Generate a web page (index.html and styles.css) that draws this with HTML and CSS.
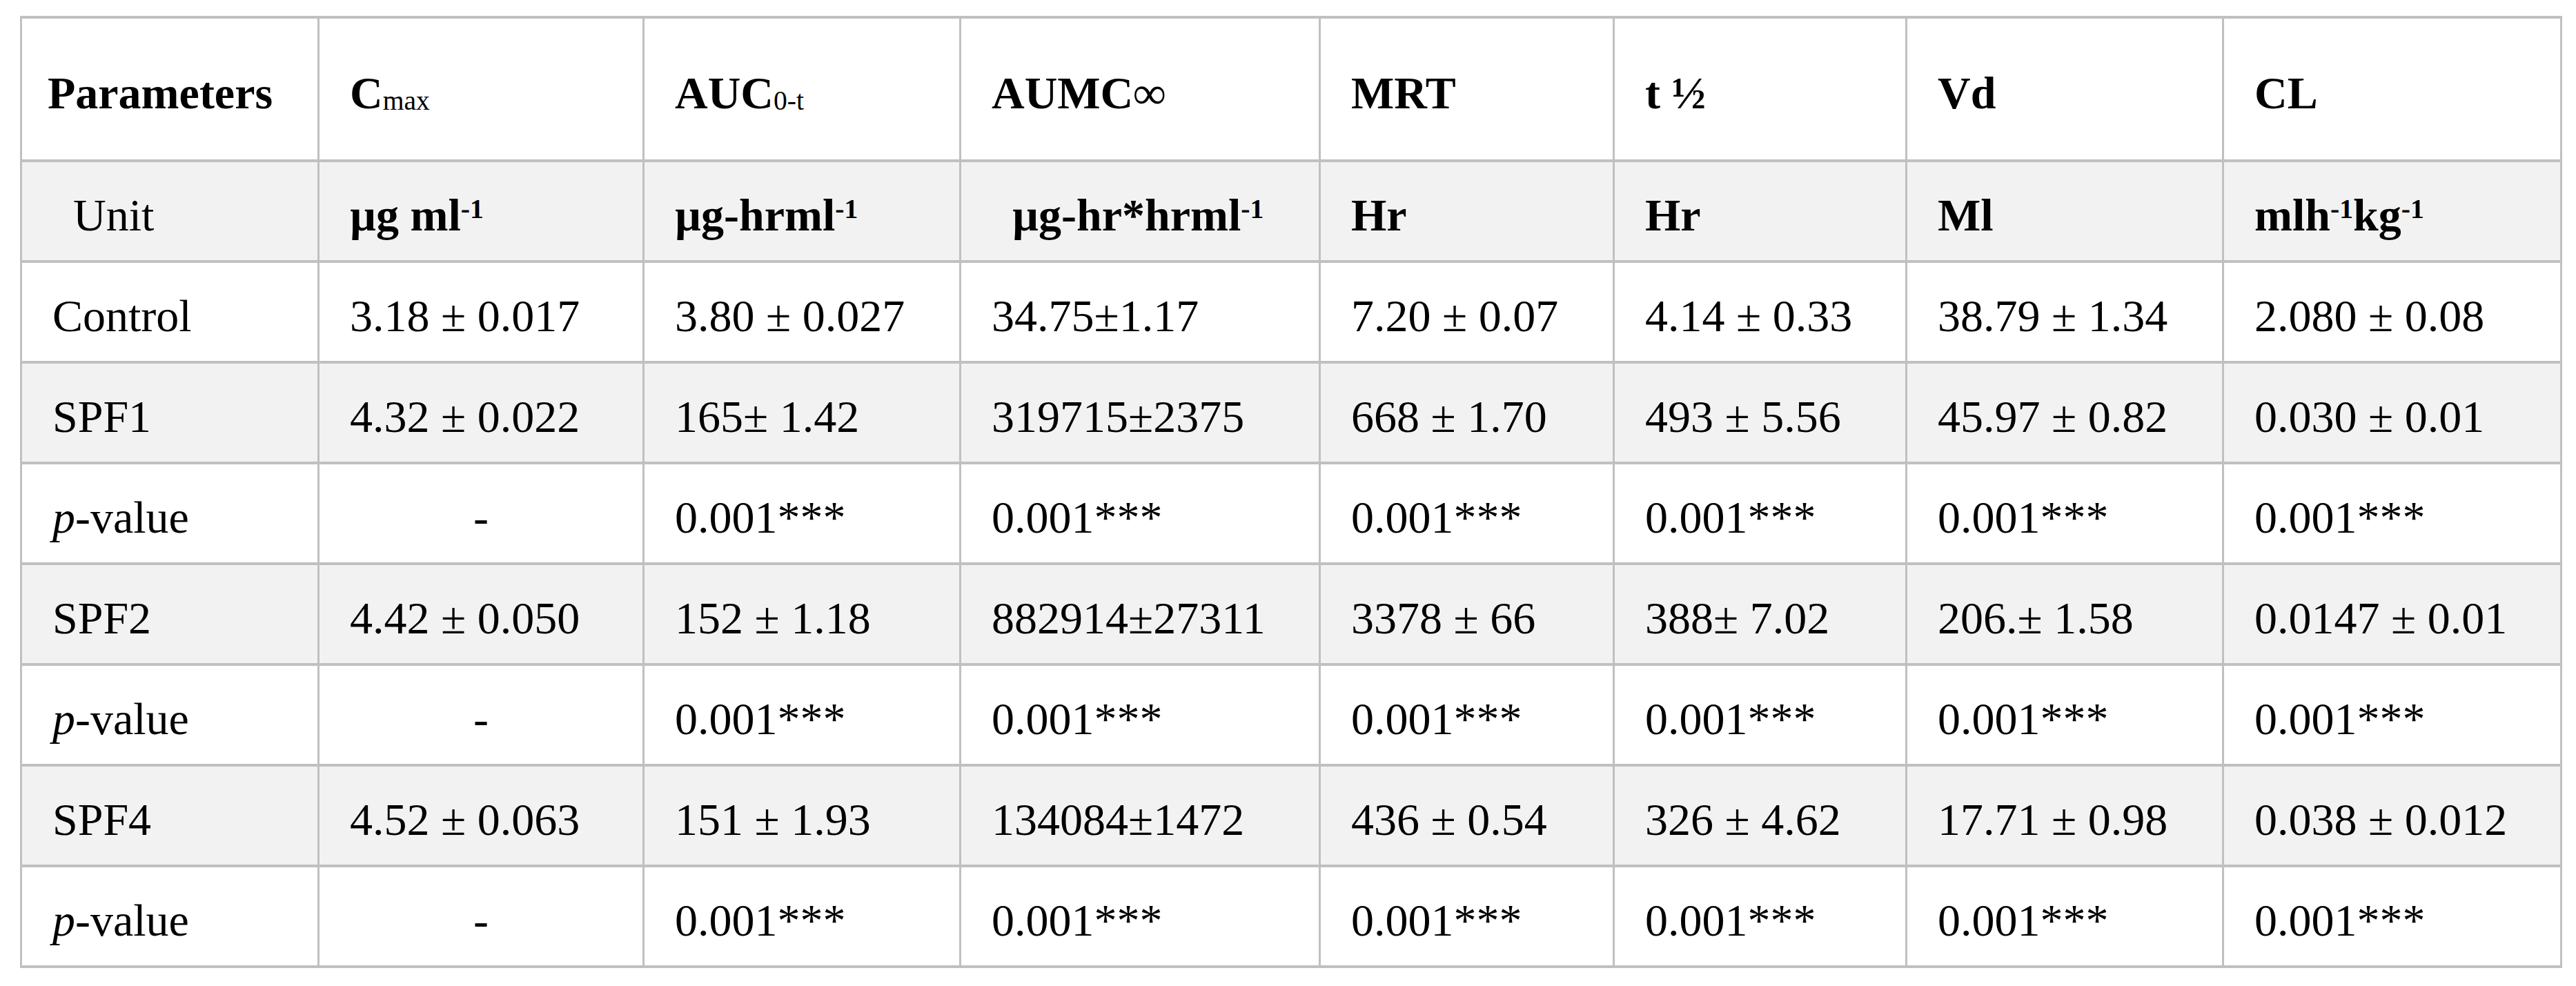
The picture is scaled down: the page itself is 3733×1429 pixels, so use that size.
FILE: index.html
```html
<!DOCTYPE html>
<html lang="en">
<head>
<meta charset="utf-8">
<title>Pharmacokinetic parameters</title>
<link rel="stylesheet" href="styles.css">
</head>
<body>
<div class="table">
  <div class="row head">
    <div class="cell first-head"><span>Parameters</span></div>
    <div class="cell"><span>C<span class="sub">max</span></span></div>
    <div class="cell"><span>AUC<span class="sub">0-t</span></span></div>
    <div class="cell"><span>AUMC∞</span></div>
    <div class="cell"><span>MRT</span></div>
    <div class="cell"><span>t ½</span></div>
    <div class="cell"><span>Vd</span></div>
    <div class="cell"><span>CL</span></div>
  </div>
  <div class="row alt units">
    <div class="cell indent plain"><span>Unit</span></div>
    <div class="cell"><span>µg ml<sup>-1</sup></span></div>
    <div class="cell"><span>µg-hrml<sup>-1</sup></span></div>
    <div class="cell indent"><span>µg-hr*hrml<sup>-1</sup></span></div>
    <div class="cell"><span>Hr</span></div>
    <div class="cell"><span>Hr</span></div>
    <div class="cell"><span>Ml</span></div>
    <div class="cell"><span>mlh<sup>-1</sup>kg<sup>-1</sup></span></div>
  </div>
  <div class="row">
    <div class="cell"><span>Control</span></div>
    <div class="cell"><span>3.18 ± 0.017</span></div>
    <div class="cell"><span>3.80 ± 0.027</span></div>
    <div class="cell"><span>34.75±1.17</span></div>
    <div class="cell"><span>7.20 ± 0.07</span></div>
    <div class="cell"><span>4.14 ± 0.33</span></div>
    <div class="cell"><span>38.79 ± 1.34</span></div>
    <div class="cell"><span>2.080 ± 0.08</span></div>
  </div>
  <div class="row alt">
    <div class="cell"><span>SPF1</span></div>
    <div class="cell"><span>4.32 ± 0.022</span></div>
    <div class="cell"><span>165± 1.42</span></div>
    <div class="cell"><span>319715±2375</span></div>
    <div class="cell"><span>668 ± 1.70</span></div>
    <div class="cell"><span>493 ± 5.56</span></div>
    <div class="cell"><span>45.97 ± 0.82</span></div>
    <div class="cell"><span>0.030 ± 0.01</span></div>
  </div>
  <div class="row">
    <div class="cell"><span><i>p</i>-value</span></div>
    <div class="cell center"><span>-</span></div>
    <div class="cell"><span>0.001***</span></div>
    <div class="cell"><span>0.001***</span></div>
    <div class="cell"><span>0.001***</span></div>
    <div class="cell"><span>0.001***</span></div>
    <div class="cell"><span>0.001***</span></div>
    <div class="cell"><span>0.001***</span></div>
  </div>
  <div class="row alt">
    <div class="cell"><span>SPF2</span></div>
    <div class="cell"><span>4.42 ± 0.050</span></div>
    <div class="cell"><span>152 ± 1.18</span></div>
    <div class="cell"><span>882914±27311</span></div>
    <div class="cell"><span>3378 ± 66</span></div>
    <div class="cell"><span>388± 7.02</span></div>
    <div class="cell"><span>206.± 1.58</span></div>
    <div class="cell"><span>0.0147 ± 0.01</span></div>
  </div>
  <div class="row">
    <div class="cell"><span><i>p</i>-value</span></div>
    <div class="cell center"><span>-</span></div>
    <div class="cell"><span>0.001***</span></div>
    <div class="cell"><span>0.001***</span></div>
    <div class="cell"><span>0.001***</span></div>
    <div class="cell"><span>0.001***</span></div>
    <div class="cell"><span>0.001***</span></div>
    <div class="cell"><span>0.001***</span></div>
  </div>
  <div class="row alt">
    <div class="cell"><span>SPF4</span></div>
    <div class="cell"><span>4.52 ± 0.063</span></div>
    <div class="cell"><span>151 ± 1.93</span></div>
    <div class="cell"><span>134084±1472</span></div>
    <div class="cell"><span>436 ± 0.54</span></div>
    <div class="cell"><span>326 ± 4.62</span></div>
    <div class="cell"><span>17.71 ± 0.98</span></div>
    <div class="cell"><span>0.038 ± 0.012</span></div>
  </div>
  <div class="row">
    <div class="cell"><span><i>p</i>-value</span></div>
    <div class="cell center"><span>-</span></div>
    <div class="cell"><span>0.001***</span></div>
    <div class="cell"><span>0.001***</span></div>
    <div class="cell"><span>0.001***</span></div>
    <div class="cell"><span>0.001***</span></div>
    <div class="cell"><span>0.001***</span></div>
    <div class="cell"><span>0.001***</span></div>
  </div>
</div>
</body>
</html>
```
FILE: styles.css
```css
html, body {
  margin: 0;
  background: #ffffff;
}

body {
  padding: 23px 0 0 29px;
  font-family: "Liberation Serif", "Times New Roman", serif;
  color: #000000;
}

.table {
  display: grid;
  width: max-content;
  grid-template-columns: 428px 468px 456px 518px 423px 421px 456px 487px;
  grid-template-rows: 204px repeat(8, 142px);
  gap: 4px 3px;
  padding: 4px 3px;
  background: #c0c0c0;
}

.row {
  display: contents;
}

.cell {
  display: flex;
  align-items: center;
  padding: 12px 8px 0 44px;
  background: #ffffff;
  font-size: 66px;
  line-height: 1;
  white-space: nowrap;
  overflow: hidden;
}

.alt > .cell {
  background: #f2f2f2;
}

.head > .cell,
.units > .cell {
  font-weight: bold;
}

.units > .cell.plain {
  font-weight: normal;
}

.head > .cell.first-head {
  padding-left: 37px;
}

.cell.indent {
  padding-left: 74px;
}

.cell.center {
  justify-content: center;
  padding-left: 8px;
}

.sub {
  font-size: 0.6em;
  vertical-align: -0.04em;
  font-weight: normal;
}

sup {
  font-size: 0.6em;
  line-height: 0;
  vertical-align: 0.45em;
}
```
